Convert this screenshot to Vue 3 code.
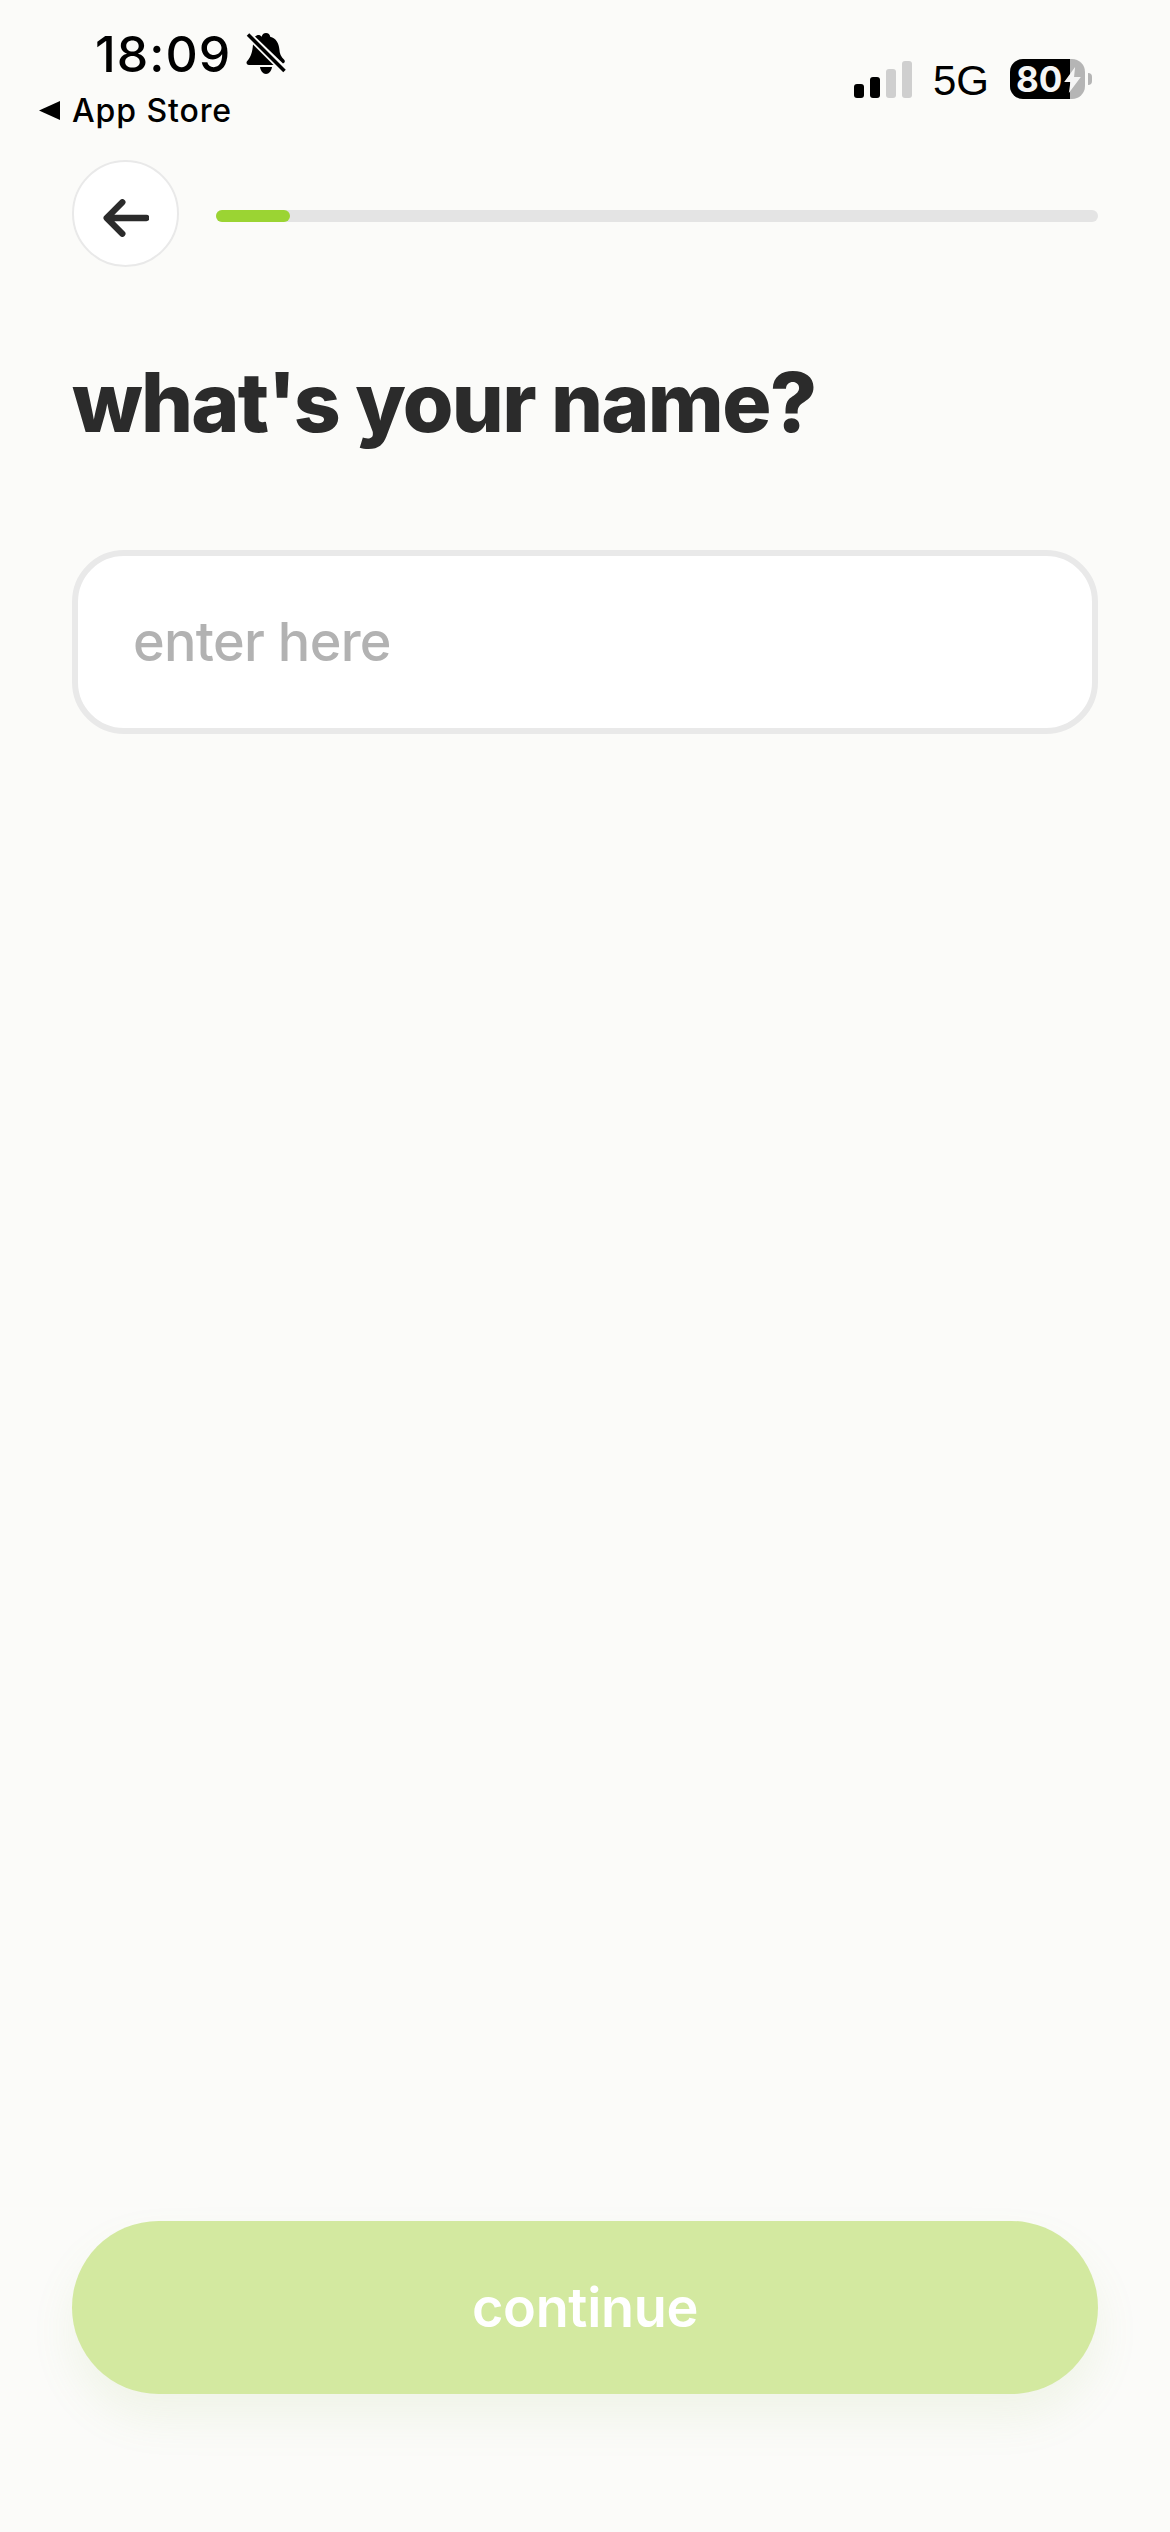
<template>
  <div class="screen">
    <header class="status">
      <div class="status-left">
        <div class="clock">
          <span class="time">18:09</span>
          <svg class="bell" viewBox="0 0 40 42" aria-hidden="true">
            <path d="M20 0c2.400 0 4 1.600 4.200 3.800 6 1.600 8.800 6.600 9.200 12.800.2 4 1.400 7 5 10.500.8 1 .6 3-1.400 3.400L9 3.500C11 2 13.500 1 15.800 3.800 16 1.600 17.600 0 20 0Z" />
            <path d="M7 11.500 27.500 32H3c-2.400 0-3.200-2.400-1.800-4C5 24 6.400 19 7 11.500Z" />
            <path d="M14 34h12c-.6 4-3 7-6 7s-5.400-3-6-7Z" />
            <path class="slash" d="M2 1.500 38.500 38" />
          </svg>
        </div>
        <div class="back-app">
          <svg class="caret" viewBox="0 0 21 19" aria-hidden="true"><path d="M21 0v19L0 9.500Z" /></svg>
          <span>App Store</span>
        </div>
      </div>
      <div class="status-right">
        <div class="signal">
          <i class="bar on b1"></i>
          <i class="bar on b2"></i>
          <i class="bar b3"></i>
          <i class="bar b4"></i>
        </div>
        <span class="network">5G</span>
        <div class="battery">
          <div class="cell">
            <div class="fill"></div>
            <span class="level">80</span>
            <svg class="bolt" viewBox="0 0 16 25" aria-hidden="true"><path d="M10.500 0 0 14.500h6L4.500 25 16 9.500H9.500Z" /></svg>
          </div>
          <i class="nub"></i>
        </div>
      </div>
    </header>

    <div class="progress-row">
      <button class="back" type="button" aria-label="back">
        <svg viewBox="0 0 44 36" aria-hidden="true"><path d="M41.500 18H4M18.500 3 3.500 18l15 15" /></svg>
      </button>
      <div class="track"><div class="done" :style="{ width: progress + '%' }"></div></div>
    </div>

    <h1 class="title">what's your name?</h1>

    <input v-model="name" class="field" type="text" placeholder="enter here" />

    <button class="continue" type="button">continue</button>
  </div>
</template>

<script setup>
import { ref } from 'vue';

const name = ref('');
const progress = ref(8.4);
</script>

<style>
body {
  background: #fbfbf9;
}
</style>

<style scoped>
.screen {
  box-sizing: border-box;
  width: 1170px;
  height: 2532px;
  padding: 0 72px 138px 72px;
  display: flex;
  flex-direction: column;
  background: #fbfbf9;
  font-family: Inter, "Liberation Sans", sans-serif;
  overflow: hidden;
}

.status {
  height: 160px;
  margin-left: -33px;
  margin-right: 6px;
  display: flex;
  justify-content: space-between;
  align-items: flex-start;
  color: #000;
}

.status-left {
  padding-top: 25px;
}

.clock {
  margin-left: 56px;
  height: 58px;
  display: flex;
  align-items: center;
  gap: 15px;
}

.time {
  font-size: 50px;
  font-weight: 500;
  line-height: 58px;
  letter-spacing: 1px;
}

.bell {
  width: 40px;
  height: 42px;
  fill: #000;
}

.bell .slash {
  fill: none;
  stroke: #000;
  stroke-width: 3.500;
}

.back-app {
  margin-top: 9px;
  height: 36px;
  display: flex;
  align-items: center;
  gap: 12px;
  font-size: 32px;
  font-weight: 500;
  letter-spacing: 0.9px;
}

.caret {
  width: 21px;
  height: 19px;
  fill: #000;
}

.status-right {
  padding-top: 57px;
  display: flex;
  align-items: center;
  gap: 21px;
}

.signal {
  height: 37px;
  display: flex;
  align-items: flex-end;
  gap: 6px;
}

.bar {
  width: 10px;
  border-radius: 3px;
  background: #cfcfcf;
}

.bar.on { background: #000; }
.b1 { height: 14px; }
.b2 { height: 21px; }
.b3 { height: 29px; }
.b4 { height: 37px; }

.network {
  padding-top: 4px;
  font-family: "Liberation Sans", sans-serif;
  font-size: 42px;
  line-height: 40px;
}

.battery {
  display: flex;
  align-items: center;
  gap: 3px;
}

.cell {
  position: relative;
  width: 75px;
  height: 40px;
  border-radius: 13px;
  background: #b5b5b5;
  overflow: hidden;
}

.fill {
  width: 60px;
  height: 100%;
  background: #000;
}

.level {
  position: absolute;
  left: 6px;
  top: 0;
  font-size: 35px;
  font-weight: 700;
  line-height: 40px;
  color: #f5f5f5;
}

.bolt {
  position: absolute;
  left: 54px;
  top: 8px;
  width: 17px;
  height: 26px;
  fill: #f5f5f5;
}

.nub {
  width: 4px;
  height: 12px;
  border-radius: 0 6px 6px 0;
  background: #b5b5b5;
}

.progress-row {
  display: flex;
  align-items: center;
  gap: 37px;
}

.back {
  box-sizing: border-box;
  flex: none;
  width: 107px;
  height: 107px;
  padding: 0;
  display: flex;
  align-items: center;
  justify-content: center;
  border: 2px solid #e9e9e9;
  border-radius: 50%;
  background: #fff;
}

.back svg {
  width: 46px;
  height: 38px;
  margin-top: 8px;
  fill: none;
  stroke: #2b2b2b;
  stroke-width: 6px;
  stroke-linecap: round;
  stroke-linejoin: round;
}

.track {
  flex: 1;
  height: 12px;
  margin-top: 4px;
  border-radius: 6px;
  background: #e4e4e4;
}

.done {
  height: 100%;
  border-radius: 6px;
  background: #9bd433;
}

.title {
  margin: 87px 0 0;
  font-size: 82px;
  font-weight: 800;
  line-height: 97px;
  letter-spacing: -1.750px;
  color: #2b2b2b;
}

.field {
  box-sizing: border-box;
  width: 100%;
  height: 184px;
  margin-top: 99px;
  padding: 0 55px 2px;
  border: 6px solid #e9e9e9;
  border-radius: 52px;
  outline: none;
  background: #fff;
  font-family: inherit;
  font-size: 54px;
  font-weight: 500;
  letter-spacing: -0.7px;
  color: #2b2b2b;
}

.field::placeholder {
  color: #b2b2b2;
  opacity: 1;
}

.continue {
  width: 100%;
  height: 173px;
  margin-top: auto;
  border: none;
  border-radius: 87px;
  background: #d3e9a0;
  box-shadow: 0 24px 44px rgba(150, 190, 90, 0.1);
  font-family: inherit;
  font-size: 54px;
  font-weight: 600;
  letter-spacing: -0.3px;
  color: #fff;
}
</style>
